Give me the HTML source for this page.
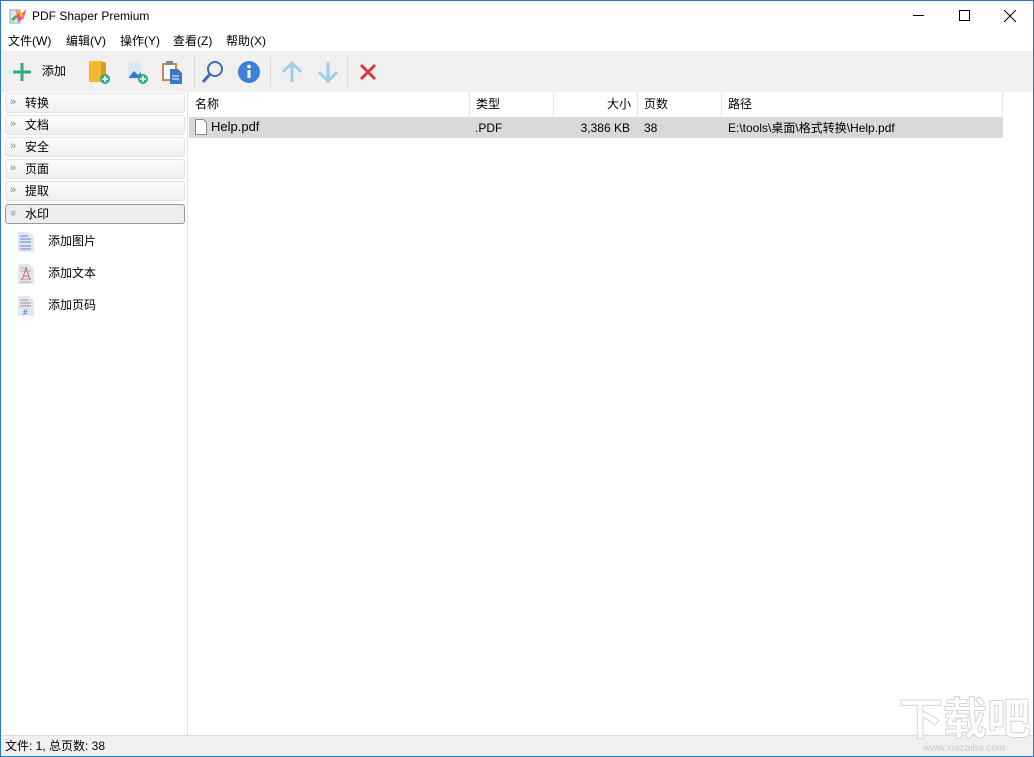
<!DOCTYPE html>
<html><head><meta charset="utf-8"><style>
*{margin:0;padding:0;box-sizing:border-box}
html,body{width:1034px;height:757px;overflow:hidden}
body{background:#fff;font-family:"Liberation Sans","Noto Sans CJK SC",sans-serif;font-size:12px;line-height:14px;color:#000;position:relative;border:1px solid #2b79c2}
.abs{position:absolute}
.title{left:0;top:0;width:1032px;height:31px;background:#fff}
.menu{top:31px;left:0;width:1032px;height:19px;background:#fff}
.menu span{position:absolute;top:2px;font-size:12px}
.tb{top:50px;left:0;width:1032px;height:41px;background:#f0f0f0}
.sep{position:absolute;top:6px;width:1px;height:30px;background:#d9d9d9}
.left{top:91px;left:0;width:187px;height:643px;background:#fff;border-right:1px solid #e3e3e3}
.grp{position:absolute;left:4px;width:180px;height:20px;border:1px solid #e4e4e4;border-radius:3px;background:linear-gradient(#fdfdfd,#efeff1)}
.grp span{position:absolute;left:19px;top:2px}
.grp i{position:absolute;left:4px;top:1px;font-style:normal;color:#888;font-size:11px}
.item{position:absolute;left:47px}
.list{top:91px;left:188px;width:844px;height:643px;background:#fff}
.hd{position:absolute;top:0;height:25px;border-right:1px solid #e5e5e5;padding:5px 6px}
.status{top:734px;left:0;width:1032px;height:21px;background:#f0f0f0;border-top:1px solid #dadada}
</style></head><body>
<div class="abs title">
<svg class="abs" style="left:8px;top:7px" width="18" height="17"><rect x="1" y="2" width="10" height="13" fill="#dfe6ef" stroke="#8aa"/><path d="M7 2 L11 8 L17 1 L15 10 L9 14 Z" fill="#e84b8a"/><path d="M9 3 L14 9" stroke="#f5b400" stroke-width="3"/><path d="M3 12 L8 8" stroke="#4caf50" stroke-width="3"/></svg>
<span class="abs" style="left:31px;top:8px;font-size:12px">PDF Shaper Premium</span>
<span class="abs" style="left:912px;top:14px;width:11px;height:1px;background:#000"></span>
<span class="abs" style="left:958px;top:9px;width:11px;height:11px;border:1px solid #000"></span>
<svg class="abs" style="left:1003px;top:9px" width="12" height="12"><path d="M0 0L12 12M12 0L0 12" stroke="#000"/></svg>
</div>
<div class="abs menu"><span style="left:7px">文件(W)</span><span style="left:65px">编辑(V)</span><span style="left:119px">操作(Y)</span><span style="left:172px">查看(Z)</span><span style="left:225px">帮助(X)</span></div>
<div class="abs tb">
<svg class="abs" style="left:11px;top:11px" width="20" height="20"><path d="M10 1V19M1 10H19" stroke="#2eab88" stroke-width="3"/></svg>
<span class="abs" style="left:41px;top:13px">添加</span>
<svg class="abs" style="left:87px;top:8px" width="24" height="26"><path d="M1 2h12v21H1z" fill="#f2b733"/><path d="M13 2l5 2v17h-5z" fill="#d99a1e"/><circle cx="17" cy="20" r="5" fill="#2eab88"/><path d="M17 17v6M14 20h6" stroke="#fff" stroke-width="1.5"/></svg>
<svg class="abs" style="left:125px;top:8px" width="24" height="26"><path d="M2 3h10l4 4v14H2z" fill="#dfe7f2"/><path d="M3 18l5-6 4 4 3-3v6H3z" fill="#3b78c8"/><circle cx="17" cy="20" r="5" fill="#2eab88"/><path d="M17 17v6M14 20h6" stroke="#fff" stroke-width="1.5"/></svg>
<svg class="abs" style="left:160px;top:8px" width="24" height="26"><rect x="1" y="4" width="15" height="18" fill="#c58a4c"/><rect x="3" y="6" width="11" height="14" fill="#fff"/><rect x="5" y="2" width="7" height="4" fill="#888"/><path d="M9 10h8l4 4v11H9z" fill="#3b78c8"/><path d="M11 17h7M11 20h7" stroke="#fff"/></svg>
<div class="sep" style="left:193px"></div>
<svg class="abs" style="left:200px;top:8px" width="24" height="26"><circle cx="14" cy="10" r="7" fill="none" stroke="#3b6cb8" stroke-width="2"/><path d="M9 15L2 23" stroke="#3b6cb8" stroke-width="3"/></svg>
<svg class="abs" style="left:236px;top:9px" width="24" height="24"><circle cx="12" cy="12" r="11" fill="#3d82d6"/><rect x="10.5" y="10" width="3" height="8" fill="#fff"/><circle cx="12" cy="6.5" r="1.8" fill="#fff"/></svg>
<div class="sep" style="left:269px"></div>
<svg class="abs" style="left:280px;top:10px" width="22" height="22"><path d="M11 21V2M2 11L11 2L20 11" stroke="#9fd0e8" stroke-width="3" fill="none"/></svg>
<svg class="abs" style="left:316px;top:10px" width="22" height="22"><path d="M11 1V20M2 11L11 20L20 11" stroke="#9fd0e8" stroke-width="3" fill="none"/></svg>
<div class="sep" style="left:346px"></div>
<svg class="abs" style="left:358px;top:12px" width="18" height="18"><path d="M2 2L16 16M16 2L2 16" stroke="#d9363e" stroke-width="3"/></svg>
</div>
<div class="abs left">
<div class="grp" style="top:1px"><i>»</i><span>转换</span></div>
<div class="grp" style="top:23px"><i>»</i><span>文档</span></div>
<div class="grp" style="top:45px"><i>»</i><span>安全</span></div>
<div class="grp" style="top:67px"><i>»</i><span>页面</span></div>
<div class="grp" style="top:89px"><i>»</i><span>提取</span></div>
<div class="grp" style="top:112px;border-color:#999;background:#ededf0"><i style="transform:rotate(90deg)">»</i><span>水印</span></div>
<svg class="abs" style="left:16px;top:139px" width="18" height="22"><path d="M1 1h11l5 5v15H1z" fill="#e3e8f0"/><path d="M3 5h8M3 8h11M3 11h11M3 15h11M3 18h11" stroke="#5b84bf"/></svg>
<span class="item" style="top:142px">添加图片</span>
<svg class="abs" style="left:16px;top:171px" width="18" height="22"><path d="M1 1h11l5 5v15H1z" fill="#e3e8f0"/><path d="M3 5h8M3 8h11M3 16h11M3 19h11" stroke="#aaa"/><path d="M5 17L9 5L13 17M6 13h6" stroke="#d66" fill="none"/></svg>
<span class="item" style="top:174px">添加文本</span>
<svg class="abs" style="left:16px;top:203px" width="18" height="22"><path d="M1 1h11l5 5v15H1z" fill="#e3e8f0"/><path d="M3 5h8M3 8h11M3 11h11" stroke="#999"/><text x="6" y="20" font-size="8" fill="#3b6cb8">#</text></svg>
<span class="item" style="top:206px">添加页码</span>
</div>
<div class="abs list">
<div class="hd" style="left:0;width:281px">名称</div>
<div class="hd" style="left:281px;width:84px">类型</div>
<div class="hd" style="left:365px;width:84px;text-align:right">大小</div>
<div class="hd" style="left:449px;width:84px">页数</div>
<div class="hd" style="left:533px;width:281px">路径</div>
<div class="abs" style="left:0;top:25px;width:814px;height:21px;background:#d9d9d9">
<svg class="abs" style="left:6px;top:2px" width="12" height="16"><path d="M.5 .5h8l3 3v12H.5z" fill="#fff" stroke="#888"/></svg>
<span class="abs" style="left:22px;top:3px;font-size:13px">Help.pdf</span>
<span class="abs" style="left:286px;top:4px">.PDF</span>
<span class="abs" style="left:365px;width:76px;text-align:right;top:4px">3,386 KB</span>
<span class="abs" style="left:455px;top:4px">38</span>
<span class="abs" style="left:539px;top:4px">E:\tools\桌面\格式转换\Help.pdf</span>
</div>
</div>
<div class="abs status"><span class="abs" style="left:4px;top:3px">文件: 1, 总页数: 38</span></div>
<div class="abs" style="left:898px;top:695px;font-size:44px;line-height:48px;white-space:nowrap;color:#fff;-webkit-text-stroke:1px #d4d4d4;font-weight:bold">下载吧</div>
<div class="abs" style="left:922px;top:742px;font-size:10px;line-height:12px;color:#ccc;white-space:nowrap">www.xiazaiba.com</div>
</body></html>
